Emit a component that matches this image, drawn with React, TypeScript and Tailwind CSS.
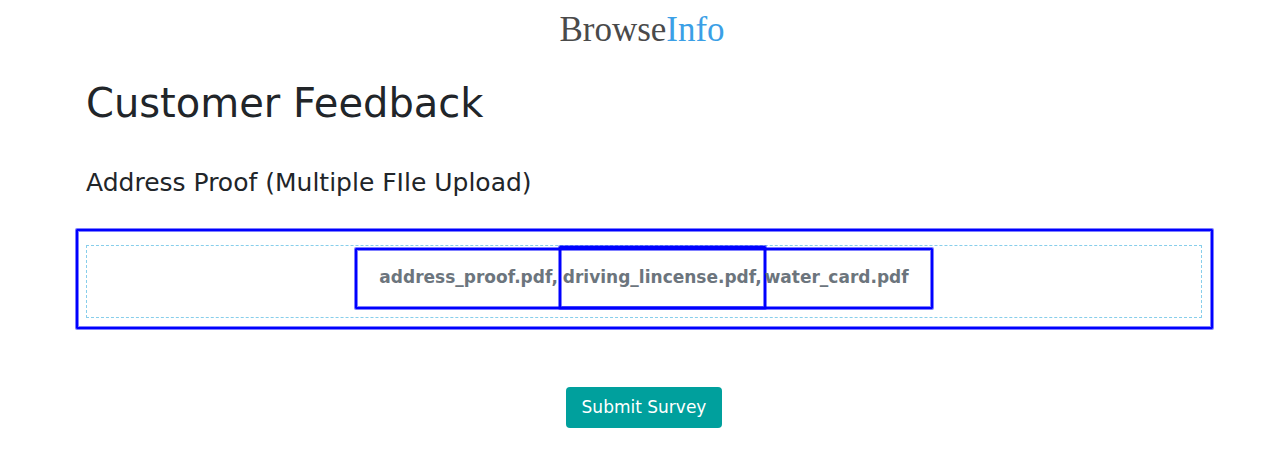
const ring =
  "border-2 border-[#0000ff] rounded-[1px] shadow-[0_0_0_1px_#0000ff80,inset_0_0_0_1px_#0000ff80]";

export default function App() {
  return (
    <div className="min-h-screen bg-white pl-1 text-[#212529] [font-family:'DejaVu_Sans',sans-serif]">
      <div className="mx-auto max-w-[1116px]">
        <header className="flex h-[60px] items-center justify-center pr-1">
          <a
            href="#"
            className="text-[35px] leading-[40px] text-[#4a4a4a] [font-family:'Liberation_Serif',serif]"
          >
            Browse<span className="text-[#3b9fe6]">Info</span>
          </a>
        </header>
        <main>
          <h1 className="pt-[19px] text-[40px] leading-[48px]">Customer Feedback</h1>
          <form onSubmit={(e) => e.preventDefault()}>
            <h2 className="pt-[41px] text-[25px] leading-[30px]">
              Address Proof (Multiple FIle Upload)
            </h2>
            <div className={`mt-[31px] -mr-[11px] -ml-[10px] pt-[14px] pr-[9px] pb-[9px] pl-[8px] ${ring}`}>
              <div className="flex h-[73px] items-start justify-center border border-dashed border-[#87ceeb] pt-[2px]">
                <div className={`flex h-[61px] items-center px-[22px] pb-[2px] text-[17px] font-bold text-[#6c757d] ${ring}`}>
                  <span>address_proof.pdf,&nbsp;</span>
                  <span className={`-mr-[7px] -ml-[5px] flex h-[63px] items-center px-[2px] ${ring}`}>
                    driving_lincense.pdf,
                  </span>
                  <span>&nbsp;water_card.pdf</span>
                </div>
              </div>
            </div>
            <div className="mt-[58px] flex justify-center">
              <button
                type="submit"
                className="h-[41px] rounded bg-[#00a09d] px-4 text-[17px] leading-[25px] text-white"
              >
                Submit Survey
              </button>
            </div>
          </form>
        </main>
      </div>
    </div>
  );
}
